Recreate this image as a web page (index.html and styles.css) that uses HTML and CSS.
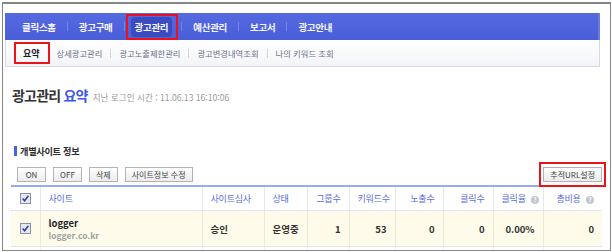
FILE: index.html
```html
<!DOCTYPE html>
<html lang="ko">
<head>
<meta charset="utf-8">
<link rel="stylesheet" href="styles.css">
</head>
<body>
<div class="frame">
  <nav class="gnb">
    <a class="gnb-item first">클릭스홈</a><span class="gnb-sep"></span>
    <a class="gnb-item">광고구매</a><span class="gnb-sep"></span>
    <span class="mark gnb-mark"><a class="gnb-item on">광고관리</a></span><span class="gnb-sep after-mark"></span>
    <a class="gnb-item">예산관리</a><span class="gnb-sep"></span>
    <a class="gnb-item">보고서</a><span class="gnb-sep"></span>
    <a class="gnb-item">광고안내</a>
  </nav>
  <div class="lnb">
    <span class="mark lnb-mark"><a class="lnb-item on">요약</a></span>
    <a class="lnb-item">상세광고관리</a><span class="lnb-sep"></span>
    <a class="lnb-item">광고노출제한관리</a><span class="lnb-sep"></span>
    <a class="lnb-item">광고변경내역조회</a><span class="lnb-sep"></span>
    <a class="lnb-item">나의 키워드 조회</a>
  </div>
  <h1 class="title"><span class="title-main">광고관리</span> <em class="title-sub">요약</em><small class="last-login">지난 로그인 시간 : 11.06.13 16:10:06</small></h1>
  <h2 class="sec-title"><span class="sec-bar"></span>개별사이트 정보</h2>
  <div class="toolbar">
    <div class="btn-group">
      <button class="btn btn-on">ON</button>
      <button class="btn btn-off">OFF</button>
      <button class="btn">삭제</button>
      <button class="btn">사이트정보 수정</button>
    </div>
    <span class="mark btn-mark"><button class="btn">추적URL설정</button></span>
  </div>
  <table class="grid">
    <colgroup>
      <col class="c-chk"><col class="c-site"><col class="c-rev"><col class="c-state">
      <col class="c-grp"><col class="c-kw"><col class="c-imp"><col class="c-clk">
      <col class="c-ctr"><col class="c-cost">
    </colgroup>
    <thead>
      <tr>
        <th class="chk"><svg class="cb" viewBox="0 0 11 11" width="11" height="11"><rect x="0.5" y="0.5" width="10" height="10" fill="#e6e8ef" stroke="#8c90a6"/><path d="M2.6 5.6 L4.6 7.8 L8.4 2.8" fill="none" stroke="#2b3caa" stroke-width="1.5"/></svg></th>
        <th class="txt">사이트</th>
        <th class="txt">사이트심사</th>
        <th class="txt">상태</th>
        <th class="num">그룹수</th>
        <th class="num">키워드수</th>
        <th class="num">노출수</th>
        <th class="num">클릭수</th>
        <th class="num ctr-h">클릭율 <span class="help">?</span></th>
        <th class="num">총비용 <span class="help">?</span></th>
      </tr>
    </thead>
    <tbody>
      <tr class="row-sel">
        <td class="chk"><svg class="cb" viewBox="0 0 11 11" width="11" height="11"><rect x="0.5" y="0.5" width="10" height="10" fill="#e6e8ef" stroke="#8c90a6"/><path d="M2.6 5.6 L4.6 7.8 L8.4 2.8" fill="none" stroke="#2b3caa" stroke-width="1.5"/></svg></td>
        <td class="txt site"><b class="site-name">logger</b><span class="site-url">logger.co.kr</span></td>
        <td class="txt strong">승인</td>
        <td class="txt strong">운영중</td>
        <td class="num strong">1</td>
        <td class="num strong">53</td>
        <td class="num strong">0</td>
        <td class="num strong">0</td>
        <td class="num strong">0.00%</td>
        <td class="num strong red">0</td>
      </tr>
      <tr class="row-empty">
        <td class="chk"></td><td></td><td></td><td></td><td></td><td></td><td></td><td></td><td></td><td></td>
      </tr>
    </tbody>
  </table>
</div>
</body>
</html>
```

FILE: styles.css
```css
html, body {
  margin: 0;
  padding: 0;
  background: #fff;
}
body {
  font-family: "Noto Sans CJK KR", "Noto Sans", sans-serif;
}
.frame {
  margin: 2px;
  width: 609px;
  height: 249px;
  box-sizing: border-box;
  border: 1px solid #858585;
  border-top-width: 2px;
  overflow: hidden;
  background: #fff;
  padding: 9px 0 0 2px;
}

/* top navigation */
.gnb {
  display: flex;
  align-items: center;
  width: 595px;
  height: 27px;
  box-sizing: border-box;
  background: linear-gradient(#5569e0, #4a5ed9);
  border-right: 2px solid #6a7adf;
  padding-left: 6px;
}
.gnb-item {
  color: #f4f5ff;
  font-size: 9.5px;
  font-weight: bold;
  letter-spacing: -0.3px;
  padding: 0 11px;
  white-space: nowrap;
}
.gnb-sep {
  width: 1px;
  height: 9px;
  background: #7585e4;
}
.mark {
  border: 2px solid #e8141c;
  box-sizing: border-box;
  display: flex;
  align-items: center;
}
.gnb-mark {
  height: 26px;
  padding: 0 4px 0 3px;
  margin-left: 1px;
}
.gnb-item.on {
  background: #3b4cc2;
  border-radius: 4px;
  padding: 0 4px;
  line-height: 20px;
}
.gnb-sep.after-mark {
  margin-left: 3px;
}

/* sub navigation */
.lnb {
  display: flex;
  align-items: center;
  width: 595px;
  height: 27px;
  box-sizing: border-box;
  border: 1px solid #d7dae6;
  border-top: none;
  background: linear-gradient(#ffffff, #f3f4f8);
  padding-left: 8px;
}
.lnb-item {
  color: #6c7089;
  font-size: 8.3px;
  padding: 0 8px;
  white-space: nowrap;
}
.lnb-mark {
  height: 22px;
  padding: 0;
  margin-right: -1px;
}
.lnb-item.on {
  color: #1e1e28;
  font-weight: bold;
  font-size: 9px;
  padding: 0 8px 0 7px;
}
.lnb-sep {
  width: 1px;
  height: 9px;
  background: #d3d5dd;
}

/* title */
.title {
  margin: 20px 0 0 7px;
  font-size: 14px;
  line-height: 16px;
  font-weight: bold;
  letter-spacing: -0.8px;
  color: #333;
}
.title-sub {
  font-style: normal;
  color: #3b57e6;
}
.last-login {
  font-size: 8.6px;
  font-weight: normal;
  letter-spacing: 0;
  color: #9a9a9a;
  margin-left: 5px;
}

/* section title */
.sec-title {
  display: flex;
  align-items: center;
  margin: 40px 0 0 9px;
  font-size: 9.2px;
  line-height: 12px;
  font-weight: bold;
  color: #2e2e2e;
  letter-spacing: -0.3px;
}
.sec-bar {
  width: 3px;
  height: 10px;
  background: #4c61dd;
  margin-right: 3px;
}

/* toolbar */
.toolbar {
  display: flex;
  justify-content: space-between;
  align-items: center;
  margin: 10px 0 0 12px;
  width: 589px;
  height: 15px;
}
.btn-group {
  display: flex;
  gap: 7px;
}
.btn {
  height: 15px;
  box-sizing: border-box;
  border: 1px solid #b3b3b3;
  background: linear-gradient(#ffffff, #ececec);
  font-family: "Noto Sans CJK KR", "Noto Sans", sans-serif;
  font-size: 8px;
  color: #444;
  padding: 0 6px;
  line-height: 12px;
  margin: 0;
}
.btn-on, .btn-off {
  width: 29px;
  padding: 0;
}
.btn-mark {
  padding: 3px 2px;
  margin: -5px 0;
}

/* table */
.grid {
  margin: 3px 0 0 6px;
  width: 591px;
  table-layout: fixed;
  border-collapse: collapse;
  border-top: 2px solid #9eaae8;
}
.c-chk { width: 29px; }
.c-site { width: 162px; }
.c-rev { width: 62px; }
.c-state { width: 43px; }
.c-grp { width: 42px; }
.c-kw { width: 46px; }
.c-imp { width: 48px; }
.c-clk { width: 50px; }
.c-ctr { width: 50px; }
.c-cost { width: 59px; }

.grid th {
  height: 23px;
  padding: 0 8px;
  font-size: 9px;
  font-weight: normal;
  color: #5a6ddf;
  border-bottom: 1px solid #dfe3f2;
  border-left: 1px solid #e6e8f0;
  white-space: nowrap;
  letter-spacing: -0.2px;
}
.grid th.chk, .grid td.chk {
  border-left: none;
  padding: 0;
  text-align: center;
}
.grid .txt { text-align: left; }
.grid .num { text-align: right; }
.grid th.ctr-h { padding-right: 11px; }
.cb { display: block; margin: 0 auto; }

.help {
  display: inline-block;
  width: 8px;
  height: 8px;
  border-radius: 50%;
  background: #c4c7d0;
  color: #fff;
  font-size: 6px;
  line-height: 8px;
  text-align: center;
  font-weight: bold;
  vertical-align: 0;
  margin-left: 3px;
}

.grid td {
  padding: 0 8px;
  font-size: 9.5px;
  color: #333;
  border-left: 1px solid #ece9da;
  white-space: nowrap;
}
.row-sel td {
  height: 35px;
  background: #fefbea;
  border-bottom: 1px solid #e2e4ee;
}
.row-empty td {
  height: 20px;
  background: #fff;
  border-left-color: #eeeeee;
}
.strong { font-weight: bold; }
.red { color: #e8262c; }
.site-name {
  display: block;
  color: #222;
  font-size: 9.5px;
  line-height: 12px;
}
.site-url {
  display: block;
  color: #a0a0a0;
  font-size: 8.5px;
  line-height: 12px;
  font-weight: bold;
}
.grid td.chk {
  vertical-align: middle;
}
```
